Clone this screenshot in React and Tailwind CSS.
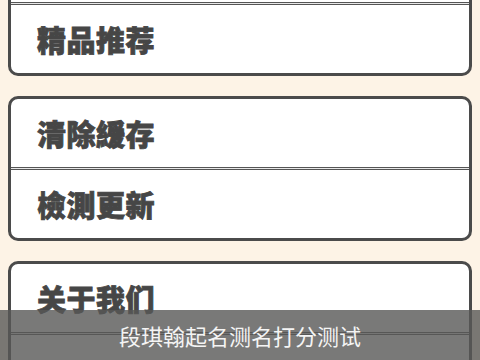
import React from 'react';

const groups = [
  ['', '精品推荐'],
  ['清除緩存', '檢測更新'],
  ['关于我们', ''],
];

function Row({ label }) {
  return (
    <div className="h-[68px] flex items-center pl-[26px]">
      <span className="text-[29px] font-black text-[#464646] leading-none tracking-[0.5px] [-webkit-text-stroke:0.8px_#464646]">
        {label}
      </span>
    </div>
  );
}

export default function App() {
  return (
    <div
      className="relative w-[480px] h-[360px] overflow-hidden bg-[#fdf3e6]"
      style={{ fontFamily: '"Noto Sans CJK SC", "Noto Sans", sans-serif' }}
    >
      <div className="-mt-[69px] flex flex-col gap-[20px] px-2">
        {groups.map((rows, i) => (
          <div key={i} className="border-[3px] border-[#4b4b4b] rounded-[10px] bg-white">
            <Row label={rows[0]} />
            <div className="h-[3px] border-y border-[#555] bg-[#e8e8e8]" />
            <Row label={rows[1]} />
          </div>
        ))}
      </div>

      {/* toast bar */}
      <div className="absolute left-0 right-0 bottom-0 h-[50px] bg-[rgba(88,88,86,0.8)] flex items-center justify-center">
        <span className="text-[22px] text-[#f4f4f4] leading-none">段琪翰起名测名打分测试</span>
      </div>
    </div>
  );
}
